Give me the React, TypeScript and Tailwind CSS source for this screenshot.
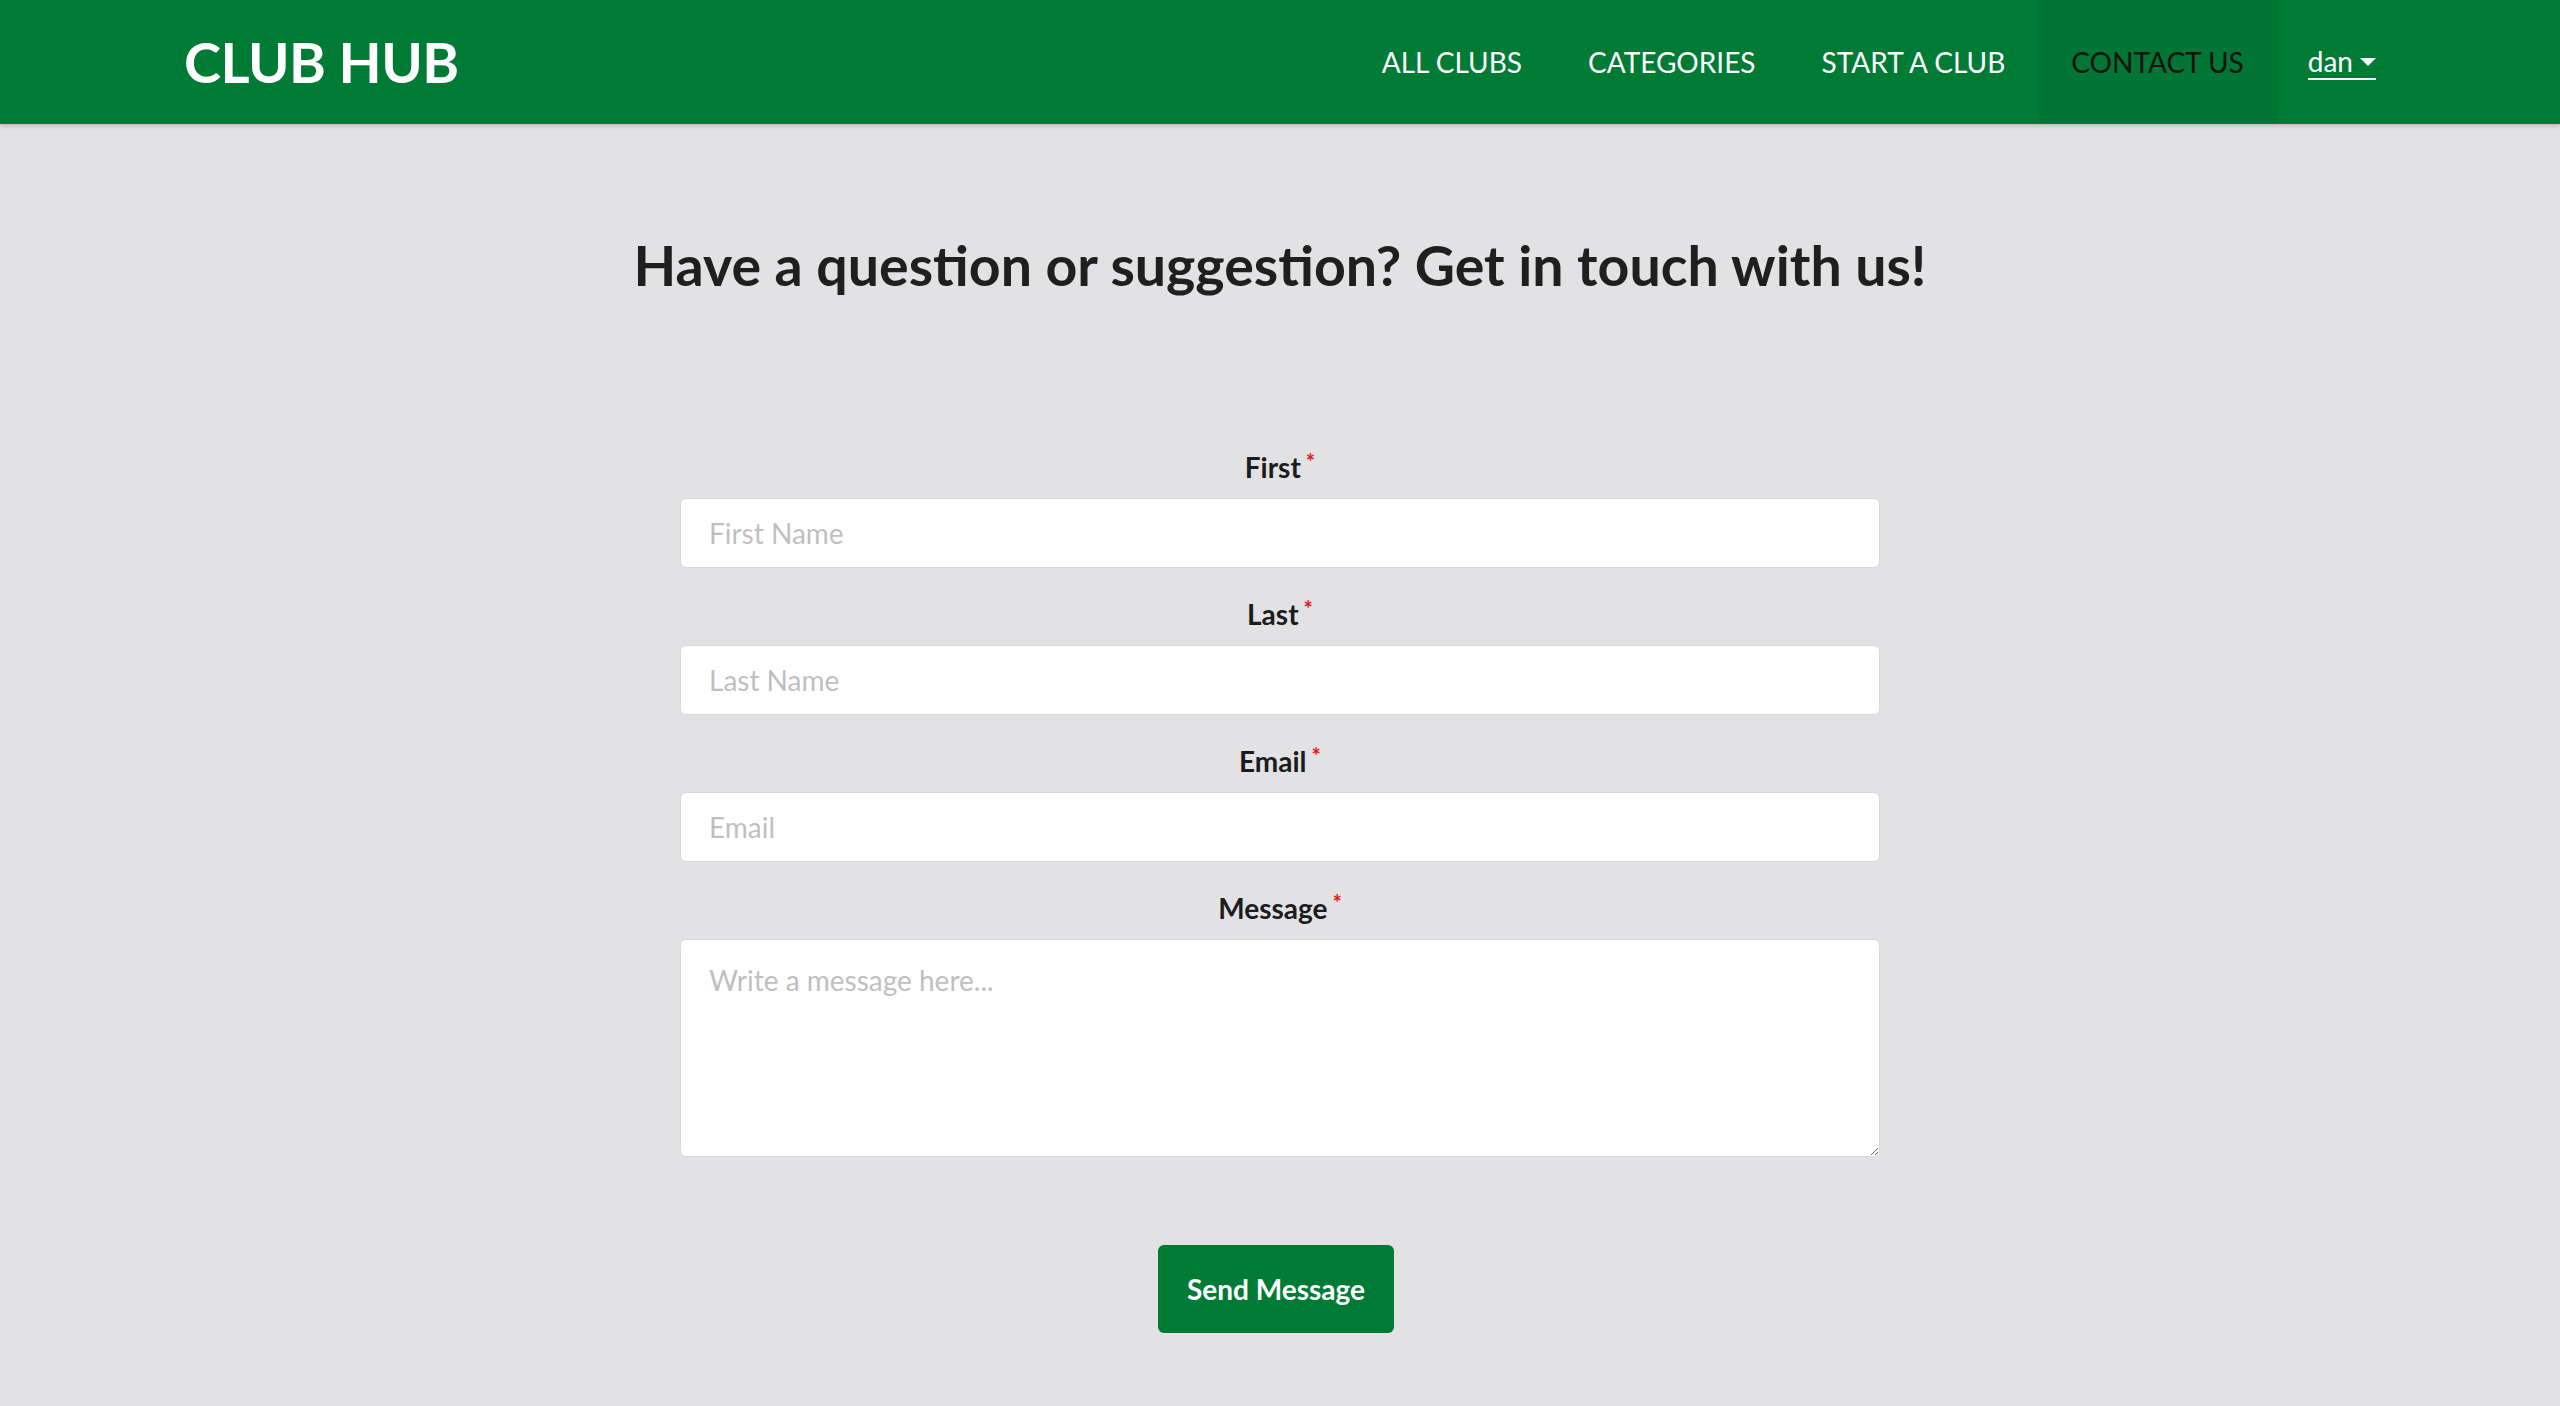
import React from 'react';

const navLinks = [
  { label: 'ALL CLUBS', active: false },
  { label: 'CATEGORIES', active: false },
  { label: 'START A CLUB', active: false },
  { label: 'CONTACT US', active: true },
];

const fields = [
  { label: 'First', placeholder: 'First Name', type: 'text' },
  { label: 'Last', placeholder: 'Last Name', type: 'text' },
  { label: 'Email', placeholder: 'Email', type: 'email' },
];

const Label = ({ text }: { text: string }) => (
  <label className="flex justify-center h-[40px] leading-[40px] mb-[11px] text-[28px] font-bold text-[#1c1c1c]">
    {text}
    <span className="text-[#e0161b] text-[22px] leading-none ml-[5px] mt-[4px]">*</span>
  </label>
);

const App: React.FC = () => {
  return (
    <div className="min-h-screen bg-[#e2e2e4] font-['Lato','Liberation_Sans',sans-serif]">
      {/* Navbar */}
      <nav className="h-[124px] bg-[#007b36] shadow-[0_2px_4px_rgba(0,0,0,0.18)] relative z-10">
        <div className="h-full px-[184px] flex items-center justify-between">
          <a href="#" className="text-white text-[56px] font-bold leading-none tracking-[-0.5px]">
            CLUB HUB
          </a>
          <ul className="flex h-full items-stretch">
            {navLinks.map((link) => (
              <li key={link.label} className="flex">
                <a
                  href="#"
                  className={
                    link.active
                      ? 'flex items-center px-[33px] text-[28px] text-[#111] bg-[#017535]'
                      : 'flex items-center px-[33px] text-[28px] text-white'
                  }
                >
                  {link.label}
                </a>
              </li>
            ))}
            <li className="flex items-center pl-[31px]">
              <a href="#" className="flex items-center text-[28px] text-white border-b-2 border-white leading-[34px]">
                dan
                <span className="ml-[7px] mt-[2px] w-0 h-0 border-l-[8px] border-r-[8px] border-t-[8px] border-l-transparent border-r-transparent border-t-white" />
              </a>
            </li>
          </ul>
        </div>
      </nav>

      {/* Contact form */}
      <main className="flex flex-col items-center pb-[72px]">
        <h1 className="mt-[108px] text-[55.5px] leading-[1.2] font-bold text-[#1f1f1f]">
          Have a question or suggestion? Get in touch with us!
        </h1>

        <form className="mt-[148px] w-[1200px] flex flex-col">
          {fields.map((f) => (
            <div key={f.label} className="flex flex-col mb-[26px]">
              <Label text={f.label} />
              <input
                type={f.type}
                placeholder={f.placeholder}
                className="h-[70px] w-full bg-white border border-[#d9d9db] rounded-[6px] px-[28px] text-[28px] text-[#333] placeholder:text-[#bfbfbf] outline-none"
              />
            </div>
          ))}
          <div className="flex flex-col">
            <Label text="Message" />
            <textarea
              placeholder="Write a message here..."
              className="h-[218px] w-full bg-white border border-[#d9d9db] rounded-[6px] px-[28px] pt-[20px] text-[28px] leading-[40px] text-[#333] placeholder:text-[#bfbfbf] outline-none"
            />
          </div>
          <div className="flex justify-center mt-[88px] pr-[8px]">
            <button
              type="button"
              className="h-[88px] px-[29px] rounded-[6px] bg-[#007b36] text-white text-[28px] font-bold"
            >
              Send Message
            </button>
          </div>
        </form>
      </main>
    </div>
  );
};

export default App;
